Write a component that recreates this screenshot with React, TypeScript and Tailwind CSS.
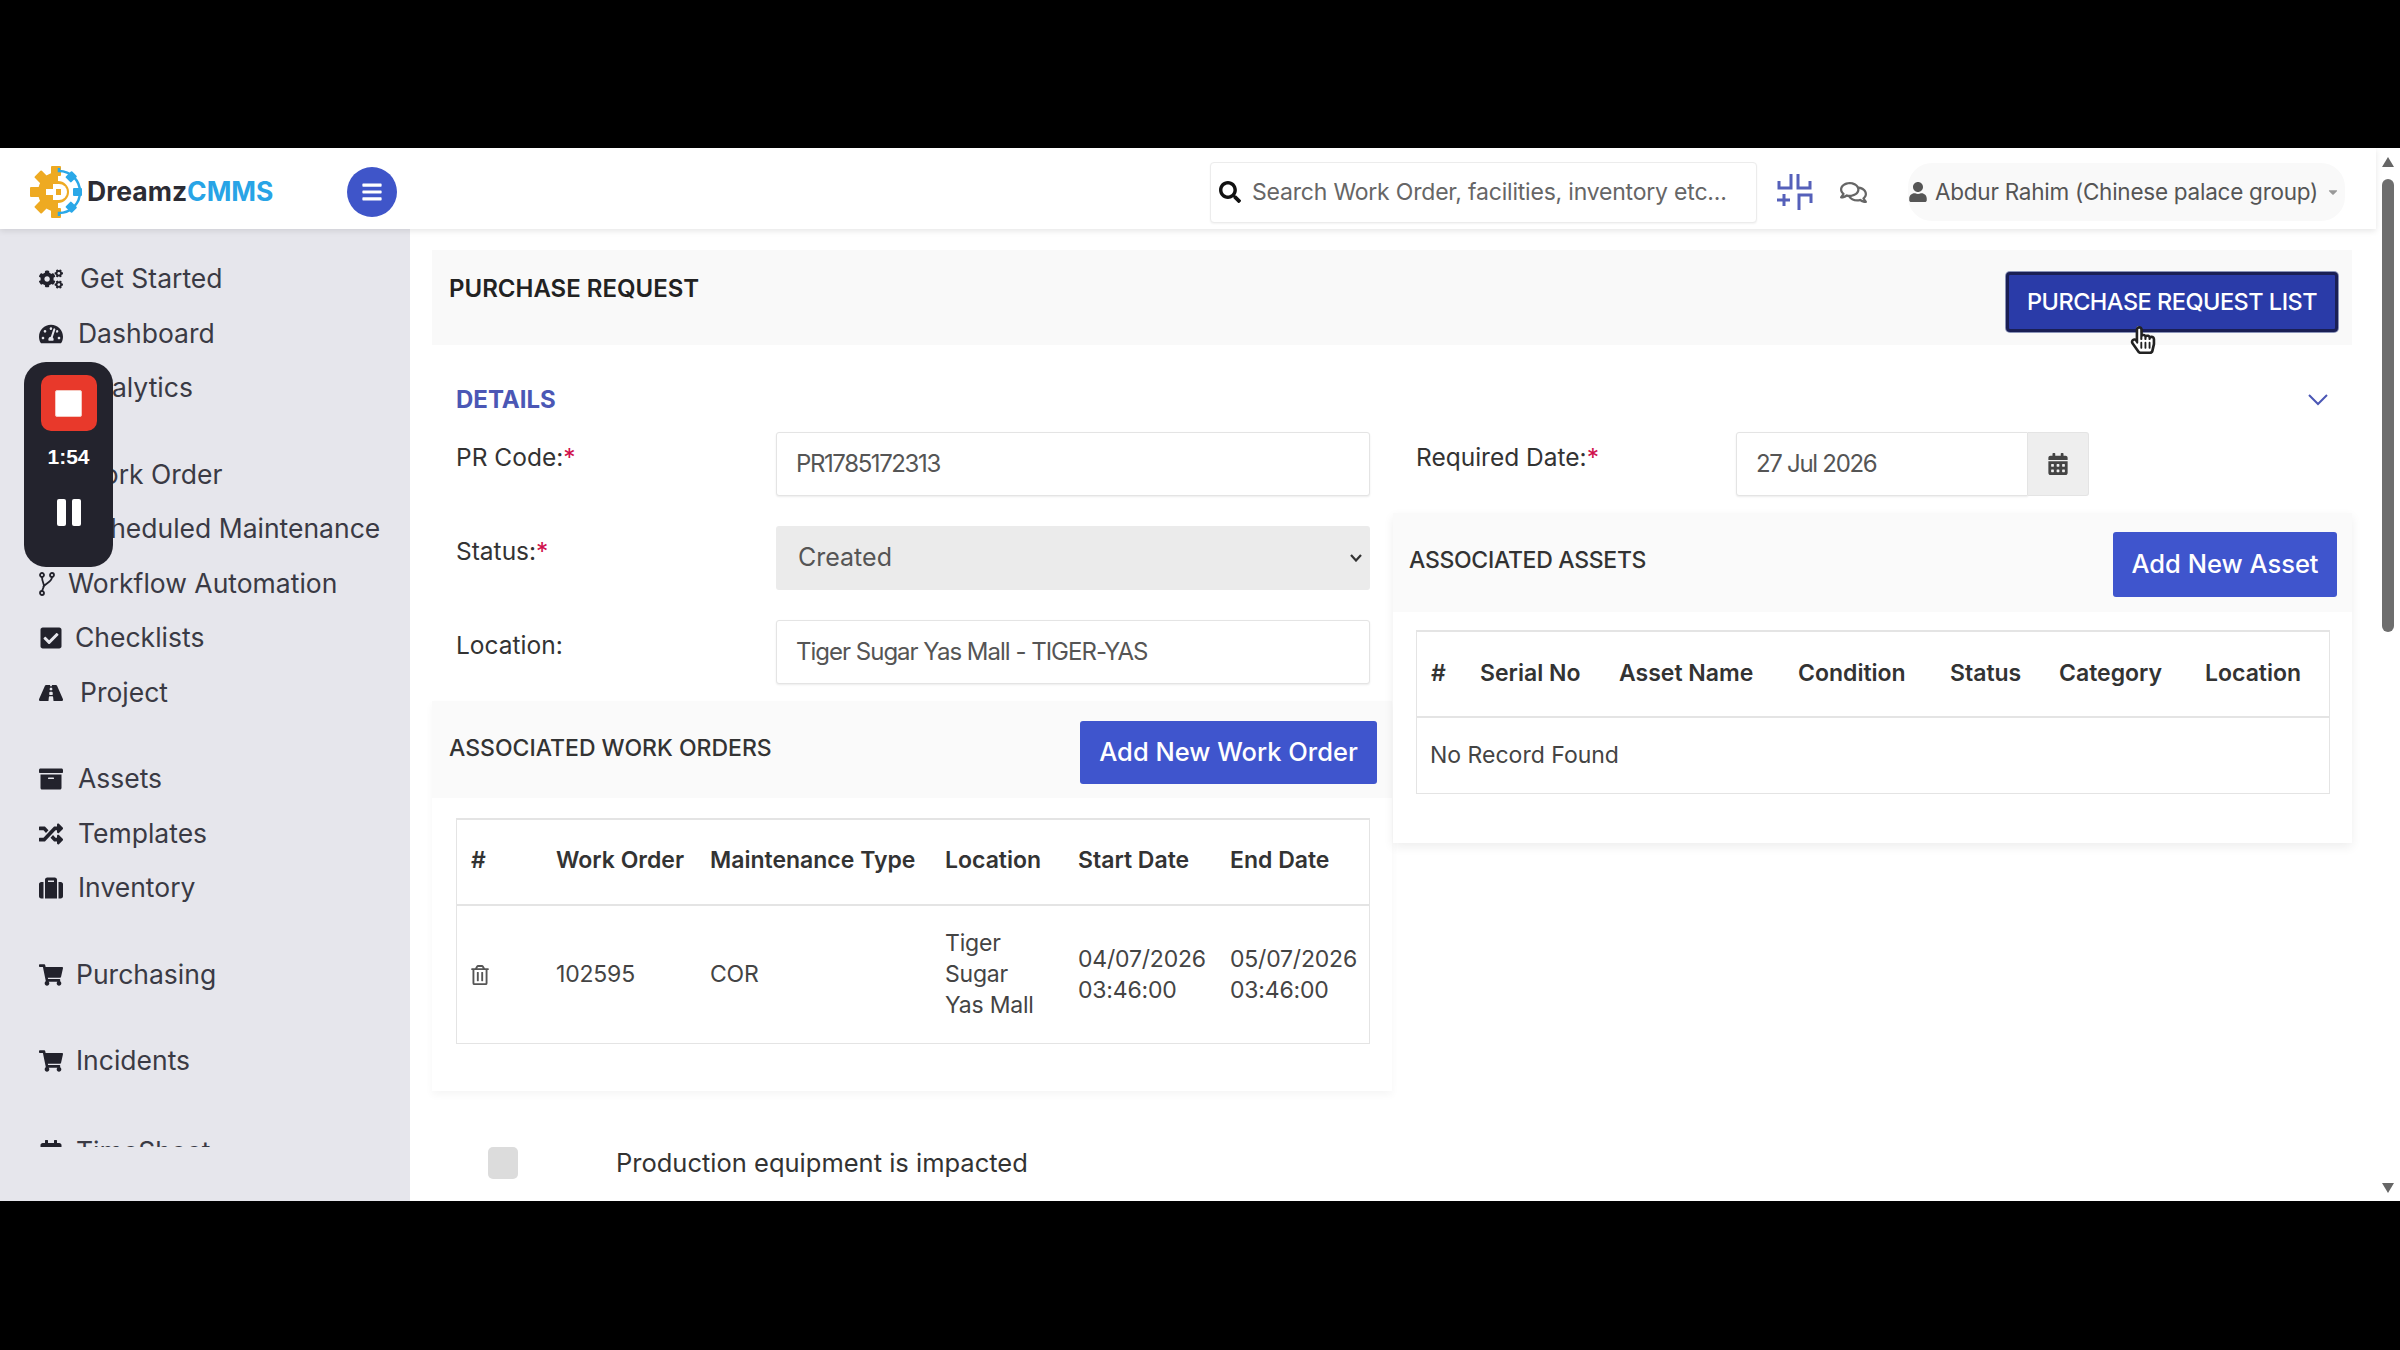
import React from 'react';
import {
  FaArchive,
  FaBars,
  FaCalendarAlt,
  FaCaretDown,
  FaCheckSquare,
  FaChartBar,
  FaCogs,
  FaRegComments,
  FaRegHandPointer,
  FaHandPointer,
  FaRegTrashAlt,
  FaRandom,
  FaRoad,
  FaSearch,
  FaShoppingCart,
  FaSuitcase,
  FaTachometerAlt,
  FaUser,
  FaWrench,
  FaCalendarCheck,
} from 'react-icons/fa';

const ForkIcon = ({ className }: { className?: string }) => (
  <svg width="16" height="24" viewBox="0 0 16 24" fill="none" stroke="#22222c" strokeWidth="1.8" className={className}>
    <circle cx="3" cy="3" r="2" />
    <circle cx="13" cy="3" r="2" />
    <circle cx="3" cy="21" r="2" />
    <path d="M3 5 C3 9 5 12 5 14 L3 19 M13 5 C13 10 7 11 4 15" />
  </svg>
);

const sidebarItems = [
  { label: 'Get Started', icon: FaCogs, w: 'w-[41px]' },
  { label: 'Dashboard', icon: FaTachometerAlt, w: 'w-[39px]' },
  { label: 'Analytics', icon: FaChartBar, w: 'w-[39px]' },
  { label: 'Work Order', icon: FaWrench, w: 'w-[39px]', mt: 'mt-[32px]' },
  { label: 'Scheduled Maintenance', icon: FaCalendarAlt, w: 'w-[39px]' },
  { label: 'Workflow Automation', icon: ForkIcon, w: 'w-[29px]' },
  { label: 'Checklists', icon: FaCheckSquare, w: 'w-[36px]' },
  { label: 'Project', icon: FaRoad, w: 'w-[41px]' },
  { label: 'Assets', icon: FaArchive, w: 'w-[39px]', mt: 'mt-[32px]' },
  { label: 'Templates', icon: FaRandom, w: 'w-[39px]' },
  { label: 'Inventory', icon: FaSuitcase, w: 'w-[39px]' },
  { label: 'Purchasing', icon: FaShoppingCart, w: 'w-[37px]', mt: 'mt-[32px]' },
  { label: 'Incidents', icon: FaShoppingCart, w: 'w-[37px]', mt: 'mt-[32px]' },
  { label: 'TimeSheet', icon: FaCalendarCheck, w: 'w-[37px]', mt: 'mt-[36px]' },
];

const Logo = () => (
  <svg width="54" height="54" viewBox="0 0 54 54" className="shrink-0">
    <g fill="#eeaa22">
      {[0, 45, 90, 135, 180].map((a) => (
        <rect key={a} x="22" y="1" width="10" height="10" rx="1" transform={`rotate(${-a} 27 27)`} />
      ))}
      <path d="M29 7 A20 20 0 1 0 29 47 L29 38 A11 11 0 0 0 29 16 Z" />
    </g>
    <path d="M30 3 L30 6 A21 21 0 0 1 30 48 L30 51" fill="none" stroke="#2aa8e8" strokeWidth="2.5" />
    <g fill="#2aa8e8">
      {[45, 90, 135].map((a) => (
        <rect key={a} x="23" y="1" width="8" height="9" rx="1" transform={`rotate(${a} 27 27)`} />
      ))}
    </g>
    <path d="M30 19 A8 8 0 0 1 30 35 L24 35 L24 19 Z" fill="#ffffff" />
    <path d="M17 24 H31 V30 H17 Z" fill="#ffffff" />
    <path d="M27 24 H32 V30 H27 Z" fill="#eeaa22" />
  </svg>
);

const CompareIcon = () => (
  <svg width="38" height="38" viewBox="0 0 38 38" fill="none" stroke="#5560ba" strokeWidth="3">
    <path d="M3 8 V15 H15 V1" />
    <path d="M22 1 V15 H34 V8" />
    <path d="M1 27 H14 M8 21 V33" />
    <path d="M23 37 V22 H35 V30" />
  </svg>
);

const Field = ({ label, required, children }: { label: string; required?: boolean; children: React.ReactNode }) => (
  <div className="flex h-[64px] mb-[30px]">
    <div className="w-[320px] shrink-0 pt-[9px] text-[24.5px] leading-[32px] text-[#333]">
      {label}
      {required && <span className="text-[#d0104c]">*</span>}
    </div>
    {children}
  </div>
);

const inputClass =
  'flex h-[64px] items-center border border-[#e4e4e4] bg-white px-[19px] text-[24px] text-[#555] rounded-[3px] shadow-[0_1px_2px_rgba(0,0,0,0.08)]';

const workOrderHead = ['#', 'Work Order', 'Maintenance Type', 'Location', 'Start Date', 'End Date'];
const assetHead = ['#', 'Serial No', 'Asset Name', 'Condition', 'Status', 'Category', 'Location'];

const Sidebar = () => (
  <aside className="w-[410px] shrink-0 bg-[#e6e6ec] pt-[23px]">
    <div className="h-[895px] overflow-hidden pl-[39px]">
      {sidebarItems.map((item) => (
        <div key={item.label} className={`flex h-[54.5px] items-center text-[#3a3a44] ${item.mt ?? ''}`}>
          <span className={`${item.w} shrink-0`}>
            <item.icon className="text-[24px] text-[#22222c]" />
          </span>
          <span className="whitespace-nowrap text-[26.5px]">{item.label}</span>
        </div>
      ))}
    </div>
  </aside>
);

const Header = () => (
  <header className="relative z-10 flex h-[81px] shrink-0 items-center bg-white pt-[7px] shadow-[0_2px_6px_rgba(0,0,0,0.1)]">
    <div className="ml-[29px] flex items-center">
      <Logo />
      <span className="ml-[4px] text-[26.5px] font-bold text-[#2c2c34]">
        Dreamz<span className="text-[#28a4e6]">CMMS</span>
      </span>
    </div>
    <button className="ml-[74px] flex h-[50px] w-[50px] shrink-0 items-center justify-center rounded-full bg-[#3f55c9] text-[22px] text-white">
      <FaBars />
    </button>
    <div className="ml-auto flex h-[61px] w-[547px] shrink-0 items-center rounded-[4px] border border-[#ececec] bg-white pl-[8px] shadow-[0_1px_2px_rgba(0,0,0,0.05)]">
      <FaSearch className="shrink-0 text-[22px] text-[#111]" />
      <span className="ml-[11px] whitespace-nowrap text-[23px] tracking-[-0.2px] text-[#666]">Search Work Order, facilities, inventory etc...</span>
    </div>
    <div className="ml-[19px] shrink-0">
      <CompareIcon />
    </div>
    <FaRegComments className="ml-[26px] shrink-0 text-[27px] text-[#666]" />
    <div className="ml-[41px] mr-[31px] flex h-[58px] w-[437px] shrink-0 items-center rounded-[24px] bg-[#f9f9f9]">
      <FaUser className="mr-[7px] shrink-0 text-[20px] text-[#555]" />
      <span className="whitespace-nowrap text-[22.5px] tracking-[-0.25px] text-[#555]">Abdur Rahim (Chinese palace group)</span>
      <FaCaretDown className="ml-[8px] shrink-0 text-[14px] text-[#999]" />
    </div>
  </header>
);

const Scrollbar = () => (
  <div className="flex w-[24px] shrink-0 flex-col items-center bg-white">
    <svg width="14" height="12" viewBox="0 0 14 12" className="mt-[8px]">
      <path d="M7 1 L13 11 H1 Z" fill="#666" />
    </svg>
    <div className="mt-[11px] h-[453px] w-[12px] rounded-full bg-[#6e6e6e]" />
    <svg width="14" height="12" viewBox="0 0 14 12" className="mt-auto mb-[7px]">
      <path d="M7 11 L13 1 H1 Z" fill="#666" />
    </svg>
  </div>
);

const WorkOrders = () => (
  <div className="-mt-[13px] -ml-[24px] -mr-[22px] pb-[47px] shadow-[0_4px_8px_rgba(0,0,0,0.04)]">
    <div className="flex h-[97px] items-start justify-between bg-[#fafafa] pl-[17px] pr-[15px] pt-[20px]">
      <h3 className="mt-[9px] text-[23px] font-medium leading-[36px] text-[#333]">ASSOCIATED WORK ORDERS</h3>
      <button className="h-[63px] w-[297px] rounded-[3px] bg-[#3f55cd] text-[25.5px] font-medium text-white">
        Add New Work Order
      </button>
    </div>
    <div className="mx-[24px] mt-[20px] w-[914px] border border-[#e4e4e4] border-t-[2px]">
      <table className="w-full table-fixed text-left">
        <colgroup>
          <col className="w-[85px]" />
          <col className="w-[154px]" />
          <col className="w-[235px]" />
          <col className="w-[133px]" />
          <col className="w-[152px]" />
          <col />
        </colgroup>
        <thead>
          <tr className="h-[85px] border-b-[2px] border-[#e4e4e4] text-[23px] text-[#333]">
            {workOrderHead.map((h) => (
              <th key={h} className="whitespace-nowrap pb-[3px] pl-[14px] font-semibold">{h}</th>
            ))}
          </tr>
        </thead>
        <tbody>
          <tr className="h-[138px] text-[23px] leading-[31px] tracking-[-0.2px] text-[#444]">
            <td className="pl-[13px]">
              <FaRegTrashAlt className="text-[20px] text-[#555]" />
            </td>
            <td className="pl-[14px]">102595</td>
            <td className="pl-[14px]">COR</td>
            <td className="pl-[14px]">Tiger<br />Sugar<br />Yas Mall</td>
            <td className="pl-[14px]">04/07/2026<br />03:46:00</td>
            <td className="pl-[14px]">05/07/2026<br />03:46:00</td>
          </tr>
        </tbody>
      </table>
    </div>
  </div>
);

const Assets = () => (
  <div className="-mt-[13px] -ml-[23px] h-[330px] bg-white shadow-[0_4px_10px_rgba(0,0,0,0.07)]">
    <div className="flex h-[99px] items-start justify-between bg-[#fafafa] pl-[16px] pr-[15px] pt-[19px]">
      <h3 className="mt-[10px] text-[23px] font-medium leading-[36px] tracking-[-0.3px] text-[#333]">ASSOCIATED ASSETS</h3>
      <button className="h-[65px] w-[224px] rounded-[3px] bg-[#3f55cd] text-[25.5px] font-medium text-white">
        Add New Asset
      </button>
    </div>
    <div className="ml-[23px] mt-[18px] w-[914px] border border-[#e4e4e4] border-t-[2px]">
      <table className="w-full table-fixed text-left">
        <colgroup>
          <col className="w-[49px]" />
          <col className="w-[139px]" />
          <col className="w-[179px]" />
          <col className="w-[152px]" />
          <col className="w-[109px]" />
          <col className="w-[146px]" />
          <col />
        </colgroup>
        <thead>
          <tr className="h-[85px] border-b-[2px] border-[#e4e4e4] text-[23px] text-[#333]">
            {assetHead.map((h) => (
              <th key={h} className="whitespace-nowrap pb-[2px] pl-[14px] font-semibold">{h}</th>
            ))}
          </tr>
        </thead>
        <tbody>
          <tr className="h-[76px] text-[23px] text-[#444]">
            <td colSpan={7} className="pl-[13px]">No Record Found</td>
          </tr>
        </tbody>
      </table>
    </div>
  </div>
);

const App = () => (
  <div className="h-screen w-full overflow-hidden bg-black pt-[148px] font-['Inter',sans-serif] text-[25px]">
    <div className="relative flex h-[1053px] overflow-hidden bg-white">
      <div className="flex min-w-0 flex-1 flex-col">
        <Header />
        <div className="flex min-h-0 flex-1">
          <Sidebar />
          <main className="min-w-0 flex-1 overflow-hidden pl-[22px] pr-[24px] pt-[21px]">
            <div className="flex h-[95px] items-start justify-between bg-[#f9f9f9] pl-[17px] pr-[14px] pt-[22px]">
              <h2 className="-mt-[1px] text-[24px] font-semibold leading-[36px] text-[#222]">PURCHASE REQUEST</h2>
              <button className="h-[60px] w-[332px] whitespace-nowrap rounded-[4px] border-[3px] border-[#1a1f55] bg-[#2a3ba8] text-[23.5px] font-medium tracking-[-0.5px] text-white shadow-[0_0_0_1px_#8a93b8]">
                PURCHASE REQUEST LIST
              </button>
            </div>
            <div className="flex h-[87px] items-center justify-between pb-[6px] pl-[24px] pr-[24px] pt-[28px]">
              <span className="text-[24px] font-bold text-[#4b57b5]">DETAILS</span>
              <svg width="20" height="12" viewBox="0 0 20 12" fill="none" stroke="#4b57b5" strokeWidth="2">
                <path d="M1 1 L10 10 L19 1" />
              </svg>
            </div>
            <div className="grid grid-cols-[960px_960px]">
              <div className="pl-[24px] pr-[22px]">
                <Field label="PR Code:" required>
                  <div className={`${inputClass} w-[594px] tracking-[-1.4px]`}>PR1785172313</div>
                </Field>
                <Field label="Status:" required>
                  <div className="flex h-[64px] w-[594px] items-center justify-between rounded-[3px] bg-[#ebebeb] pl-[22px] pr-[8px] text-[#555]">
                    Created
                    <svg width="12" height="8" viewBox="0 0 12 8" fill="none" stroke="#333" strokeWidth="2.2">
                      <path d="M1 1 L6 6.5 L11 1" />
                    </svg>
                  </div>
                </Field>
                <Field label="Location:">
                  <div className={`${inputClass} w-[594px] tracking-[-1px]`}>Tiger Sugar Yas Mall - TIGER-YAS</div>
                </Field>
                <WorkOrders />
                <div className="mt-[53px] flex items-center">
                  <div className="ml-[32px] h-[32px] w-[30px] rounded-[5px] bg-[#dcdcdc]" />
                  <span className="ml-[98px] text-[25.5px] text-[#333]">Production equipment is impacted</span>
                </div>
              </div>
              <div className="pl-[24px]">
                <Field label="Required Date:" required>
                  <div className={`${inputClass} w-[292px] rounded-r-none tracking-[-1.3px]`}>27 Jul 2026</div>
                  <div className="flex h-[64px] w-[61px] items-center justify-center rounded-r-[3px] border border-l-0 border-[#e4e4e4] bg-[#eeeeee]">
                    <FaCalendarAlt className="text-[22px] text-[#444]" />
                  </div>
                </Field>
                <Assets />
              </div>
            </div>
          </main>
        </div>
      </div>
      <Scrollbar />

      {/* screen recorder overlay */}
      <div className="absolute left-[24px] top-[214px] z-20 flex h-[205px] w-[89px] flex-col items-center rounded-[22px] bg-[#23232d] pt-[13px]">
        <div className="flex h-[56px] w-[56px] items-center justify-center rounded-[10px] bg-[#e8392b]">
          <div className="h-[27px] w-[27px] rounded-[2px] border border-[#f6c8c0] bg-white" />
        </div>
        <span className="mt-[12px] font-['Liberation_Sans',sans-serif] text-[21px] font-bold leading-[28px] text-white">1:54</span>
        <div className="mt-[28px] flex gap-[6px]">
          <div className="h-[27px] w-[9px] rounded-[2px] bg-white" />
          <div className="h-[27px] w-[9px] rounded-[2px] bg-white" />
        </div>
      </div>

      {/* mouse pointer */}
      <div className="absolute left-[2129px] top-[178px] z-20 text-[28px]">
        <FaHandPointer className="text-white" />
        <FaRegHandPointer className="absolute left-0 top-0 text-[#222]" />
      </div>
    </div>
  </div>
);

export default App;
